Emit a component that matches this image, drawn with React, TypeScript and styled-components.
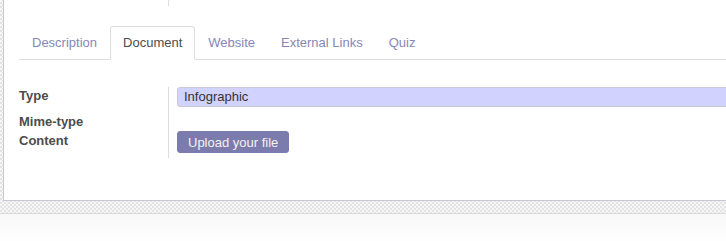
import React from "react";
import styled, { createGlobalStyle } from "styled-components";

const Global = createGlobalStyle`
  html, body { margin: 0; padding: 0; }
  body {
    font-family: "Liberation Sans", Arial, sans-serif;
    font-size: 13px;
    color: #4c4c4c;
    background: #fff;
  }
`;

const Page = styled.div`
  width: 726px;
  height: 241px;
  overflow: hidden;
  display: flex;
  flex-direction: column;
`;

const Backdrop = styled.div`
  padding-left: 3px;
  padding-bottom: 12px;
  background-color: #f4f4f4;
  background-image: repeating-conic-gradient(#e4e4e4 0% 25%, #f6f6f6 0% 50%);
  background-size: 4px 4px;
  border-bottom: 1px solid #dcdcdc;
`;

const Sheet = styled.div`
  height: 201px;
  width: 760px;
  background: #fff;
  border-left: 1px solid #c8c7d3;
  border-bottom: 1px solid #c8c7d3;
  box-sizing: border-box;
  display: flex;
  flex-direction: column;
`;

const TopGroup = styled.div`
  height: 26px;
  display: flex;
`;

const TopLeft = styled.div`
  width: 164px;
  height: 6px;
  border-right: 1px solid #dcdcdc;
`;

const Tabs = styled.ul`
  list-style: none;
  margin: 0 0 0 15px;
  padding: 0;
  display: flex;
  height: 34px;
  box-sizing: border-box;
  border-bottom: 1px solid #dddddd;
`;

const Tab = styled.li<{ $active?: boolean }>`
  box-sizing: border-box;
  height: 34px;
  padding: 0 12px 2px;
  display: flex;
  align-items: center;
  color: ${(p) => (p.$active ? "#4c4c4c" : "#8786b6")};
  background: ${(p) => (p.$active ? "#fff" : "transparent")};
  border: 1px solid ${(p) => (p.$active ? "#dddddd" : "transparent")};
  border-bottom-color: ${(p) => (p.$active ? "#fff" : "transparent")};
  border-radius: 3px 3px 0 0;
  margin-bottom: -1px;
`;

const Form = styled.div`
  margin: 27px 0 0 15px;
  display: grid;
  grid-template-columns: 150px 1fr;
`;

const LabelCell = styled.div<{ $h: number; $shift?: number }>`
  box-sizing: border-box;
  height: ${(p) => p.$h}px;
  padding-top: ${(p) => p.$shift ?? 0}px;
  border-right: 1px solid #dcdcdc;
  font-weight: bold;
  line-height: 18px;
  color: #4c4c4c;
`;

const ValueCell = styled.div<{ $h: number }>`
  height: ${(p) => p.$h}px;
  padding-left: 8px;
  display: flex;
  align-items: flex-start;
`;

const Input = styled.div`
  box-sizing: border-box;
  height: 20px;
  width: 100%;
  background: #d2d2ff;
  border: 1px solid #c8c8d8;
  border-radius: 3px;
  padding-left: 6px;
  line-height: 18px;
  color: #333;
`;

const Button = styled.button`
  height: 22px;
  padding: 0 10px;
  background: #7c7bad;
  color: #f2f2f2;
  border: 1px solid #7c7bad;
  border-radius: 3px;
  font-family: "Liberation Sans", Arial, sans-serif;
  font-size: 13px;
`;

const Footer = styled.div`
  flex: 1;
  background: linear-gradient(#f8f8f8, #ffffff 30px);
`;

export default function App() {
  const tabs = ["Description", "Document", "Website", "External Links", "Quiz"];
  return (
    <Page>
      <Global />
      <Backdrop>
        <Sheet>
          <TopGroup>
            <TopLeft />
          </TopGroup>
          <Tabs>
            {tabs.map((t) => (
              <Tab key={t} $active={t === "Document"}>
                {t}
              </Tab>
            ))}
          </Tabs>
          <Form>
            <LabelCell $h={25}>Type</LabelCell>
            <ValueCell $h={25}>
              <Input>Infographic</Input>
            </ValueCell>
            <LabelCell $h={19} $shift={1}>Mime-type</LabelCell>
            <ValueCell $h={19} />
            <LabelCell $h={27} $shift={1}>Content</LabelCell>
            <ValueCell $h={27}>
              <Button>Upload your file</Button>
            </ValueCell>
          </Form>
        </Sheet>
      </Backdrop>
      <Footer />
    </Page>
  );
}
